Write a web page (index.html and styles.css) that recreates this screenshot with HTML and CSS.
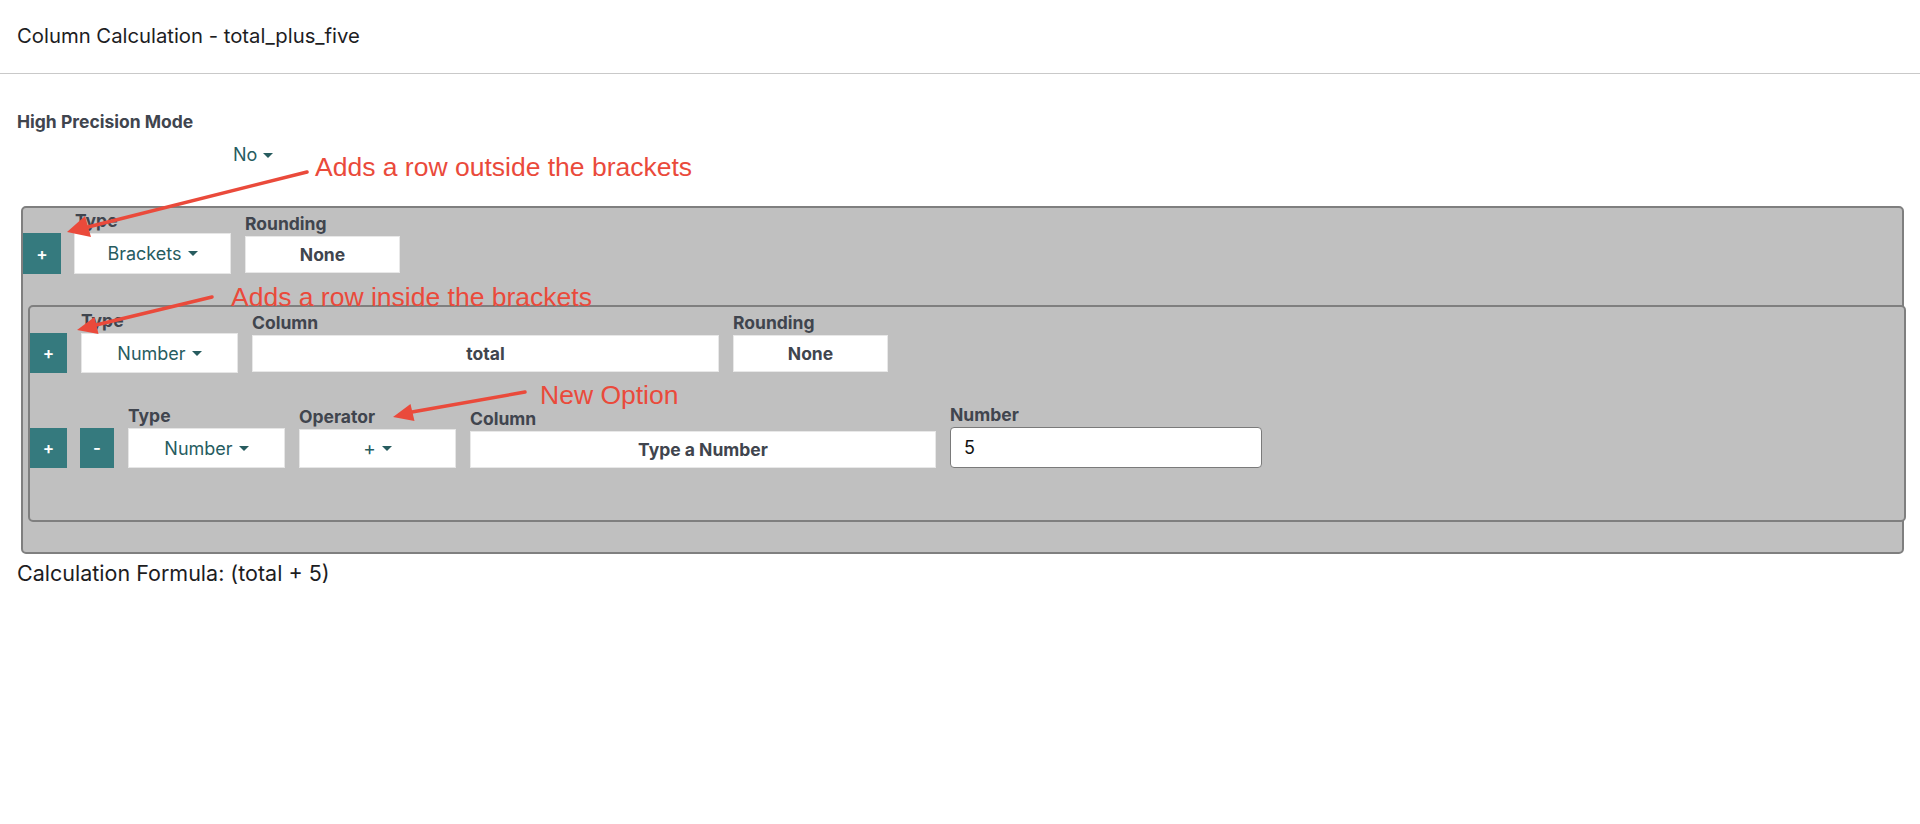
FILE: index.html
```html
<!DOCTYPE html>
<html>
<head>
    <title>Column Calculation</title>
    <meta name="viewport" content="width=device-width, initial-scale=1.0">
    <link rel="stylesheet" href="styles.css">
</head>
<body>
    <div class="page-header">
        <h1 class="page-title">Column Calculation - total_plus_five</h1>
    </div>

    <div class="content">
        <div class="precision">
            <div class="field-label">High Precision Mode</div>
            <div class="dropdown plain">No<span class="caret"></span></div>
        </div>

        <!-- outer brackets block -->
        <div class="calc-block outer">
            <div class="calc-row">
                <button class="row-btn">+</button>
                <div class="field">
                    <div class="field-label">Type</div>
                    <div class="dropdown select">Brackets<span class="caret"></span></div>
                </div>
                <div class="field">
                    <div class="field-label">Rounding</div>
                    <div class="value-box round-outer">None</div>
                </div>
            </div>

            <!-- rows inside the brackets -->
            <div class="calc-block inner">
                <div class="calc-row">
                    <button class="row-btn">+</button>
                    <div class="field">
                        <div class="field-label">Type</div>
                        <div class="dropdown select">Number<span class="caret"></span></div>
                    </div>
                    <div class="field">
                        <div class="field-label">Column</div>
                        <div class="value-box col-first">total</div>
                    </div>
                    <div class="field">
                        <div class="field-label">Rounding</div>
                        <div class="value-box round-inner">None</div>
                    </div>
                </div>

                <div class="calc-row second">
                    <button class="row-btn">+</button>
                    <button class="row-btn minus">-</button>
                    <div class="field">
                        <div class="field-label">Type</div>
                        <div class="dropdown select">Number<span class="caret"></span></div>
                    </div>
                    <div class="field">
                        <div class="field-label">Operator</div>
                        <div class="dropdown select op">+<span class="caret"></span></div>
                    </div>
                    <div class="field">
                        <div class="field-label">Column</div>
                        <div class="value-box col-second">Type a Number</div>
                    </div>
                    <div class="field">
                        <div class="field-label">Number</div>
                        <input class="number-input" type="text" value="5">
                    </div>
                </div>
            </div>
        </div>

        <p class="formula">Calculation Formula: (total + 5)</p>
    </div>

    <!-- screenshot annotations -->
    <div class="annotations">
        <svg class="arrows" width="1920" height="824" viewBox="0 0 1920 824">
            <g stroke="#ea4a3b" stroke-width="3.5" stroke-linecap="round" fill="none">
                <line x1="307" y1="172" x2="88" y2="227"/>
                <line x1="212" y1="297" x2="96" y2="325"/>
                <line x1="525" y1="392" x2="412" y2="412"/>
            </g>
            <g fill="#ea4a3b">
                <polygon points="67,232 85,216 91,237"/>
                <polygon points="77,330 94.5,317 98.5,334"/>
                <polygon points="393,417 410.5,404 414.5,421"/>
            </g>
        </svg>
        <div class="note note-outside">Adds a row outside the brackets</div>
        <div class="note note-inside">Adds a row inside the brackets</div>
        <div class="note note-option">New Option</div>
    </div>
</body>
</html>
```

FILE: styles.css
```css
:root {
    --teal: #357a7e;
    --teal-text: #275c5f;
    --label-color: #40454e;
    --block-bg: #c0c0c0;
    --block-border: #7f7f7f;
    --note-red: #ea4a3b;
}

* {
    box-sizing: border-box;
    margin: 0;
    padding: 0;
}

body {
    font-family: 'Inter', 'Liberation Sans', sans-serif;
    background-color: #ffffff;
    color: #1d1d1f;
    width: 1920px;
    height: 824px;
    position: relative;
    overflow: hidden;
}

.page-header {
    height: 74px;
    padding: 25px 17px 0;
    border-bottom: 1px solid #c9c9c9;
}

.page-title {
    font-size: 20.3px;
    font-weight: 400;
    line-height: 22px;
    color: #1d1d1f;
}

.content {
    padding: 0 16px 0 17px;
}

.precision {
    margin-top: 38px;
}

.field-label {
    font-size: 17.5px;
    font-weight: 700;
    line-height: 18px;
    color: var(--label-color);
    white-space: nowrap;
}

.precision .field-label {
    line-height: 20px;
}

.dropdown {
    display: flex;
    align-items: center;
    justify-content: center;
    gap: 6px;
    font-size: 18px;
    color: var(--teal-text);
}

.dropdown.plain {
    justify-content: flex-start;
    margin: 13px 0 0 216px;
    line-height: 20px;
}

.caret {
    width: 0;
    height: 0;
    border-left: 5px solid transparent;
    border-right: 5px solid transparent;
    border-top: 5px solid var(--teal-text);
}

.calc-block {
    background-color: var(--block-bg);
    border: 2px solid var(--block-border);
    border-radius: 5px;
}

.calc-block.outer {
    margin: 41px 0 0 4px;
    padding: 4px 0 30px;
}

.calc-block.inner {
    margin: 31px -4px 0 5px;
    padding: 5px 0 52px;
}

.calc-row {
    display: flex;
    align-items: flex-end;
    gap: 14px;
}

.calc-row.second {
    margin-top: 33px;
}

.field {
    display: flex;
    flex-direction: column;
}

.field .field-label {
    margin-bottom: 3px;
}

.row-btn {
    width: 37px;
    height: 40px;
    border: none;
    background-color: var(--teal);
    color: #ffffff;
    font-family: 'Inter', 'Liberation Sans', sans-serif;
    font-size: 17px;
    font-weight: 600;
}

.row-btn.minus {
    width: 34px;
    margin-left: -1px;
}

.outer > .calc-row .row-btn {
    height: 41px;
    width: 38px;
}

.select {
    width: 157px;
    height: 40px;
    background-color: #ffffff;
    border: 1px solid #e6e6e6;
}

.outer > .calc-row .select {
    height: 41px;
    margin-left: -1px;
}

.select.op {
    height: 39px;
    font-size: 19px;
}

.value-box {
    height: 37px;
    display: flex;
    align-items: center;
    justify-content: center;
    background-color: #ffffff;
    border: 1px solid #e8e8e8;
    font-size: 17.5px;
    font-weight: 700;
    color: var(--label-color);
}

.round-outer {
    width: 155px;
    margin-bottom: 1px;
}

.col-first {
    width: 467px;
    margin-bottom: 1px;
}

.round-inner {
    width: 155px;
    margin-bottom: 1px;
}

.col-second {
    width: 466px;
}

.number-input {
    width: 312px;
    height: 41px;
    padding: 0 13px;
    border: 1px solid #7a7a7a;
    border-radius: 4px;
    background-color: #ffffff;
    font-family: 'Inter', 'Liberation Sans', sans-serif;
    font-size: 18px;
    color: #111111;
    outline: none;
}

.formula {
    margin-top: 8px;
    font-size: 21.5px;
    line-height: 22px;
    color: #1d1d1f;
}

/* annotation layer */
.annotations {
    position: absolute;
    top: 0;
    left: 0;
    width: 1920px;
    height: 824px;
    pointer-events: none;
}

.arrows {
    position: absolute;
    top: 0;
    left: 0;
}

.note {
    position: absolute;
    font-family: 'Liberation Sans', Arial, sans-serif;
    font-size: 26.5px;
    line-height: 30px;
    color: var(--note-red);
    white-space: nowrap;
}

.note-outside {
    left: 315px;
    top: 152px;
}

.note-inside {
    left: 231px;
    top: 282px;
}

.note-option {
    left: 540px;
    top: 380px;
}
```
